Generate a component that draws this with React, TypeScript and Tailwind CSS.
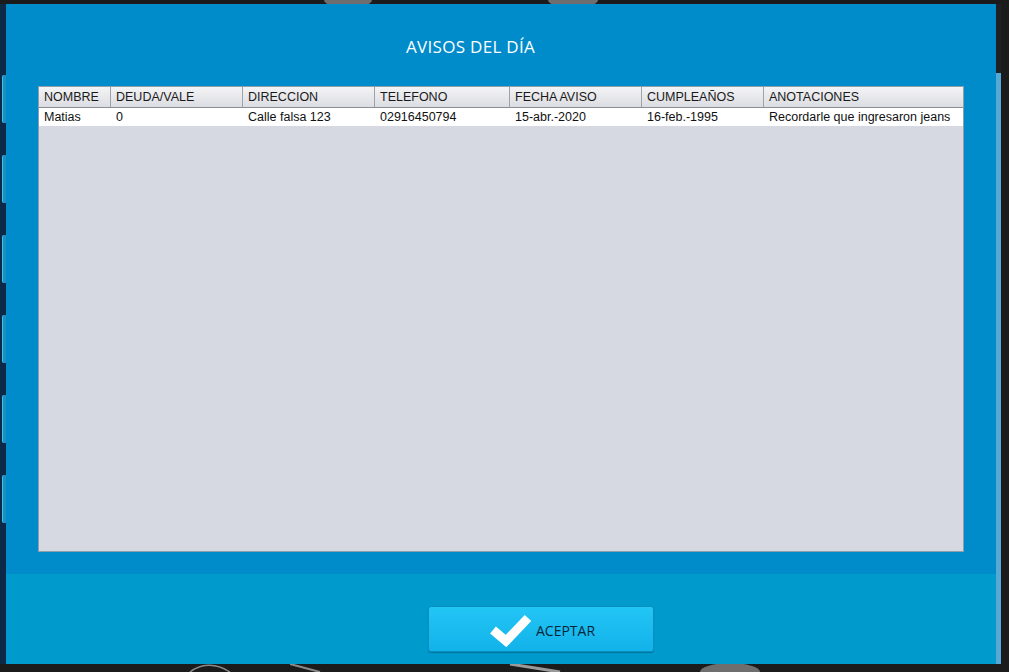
import React from 'react';

const columns = [
  { label: 'NOMBRE', w: 'w-[72px]' },
  { label: 'DEUDA/VALE', w: 'w-[132px]' },
  { label: 'DIRECCION', w: 'w-[132px]' },
  { label: 'TELEFONO', w: 'w-[135px]' },
  { label: 'FECHA AVISO', w: 'w-[132px]' },
  { label: 'CUMPLEAÑOS', w: 'w-[122px]' },
  { label: 'ANOTACIONES', w: 'flex-1' },
];

const rows = [
  ['Matias', '0', 'Calle falsa 123', '02916450794', '15-abr.-2020', '16-feb.-1995', 'Recordarle que ingresaron jeans'],
];

const SideTabs: React.FC = () => (
  <div className="w-[6px] bg-[#0c2a48] flex flex-col pt-[71px] gap-[32px]">
    {[0, 1, 2, 3, 4, 5].map((i) => (
      <div key={i} className="h-[48px] ml-[2px] w-[4px] rounded-l-[2px] bg-[#1d8fc0] border-l border-[#3cc4f0]" />
    ))}
  </div>
);

const App: React.FC = () => {
  return (
    <div className="relative w-[1009px] h-[672px] bg-[#1b1b1c] overflow-hidden font-['Liberation_Sans',Arial,sans-serif]">
      {/* wallpaper scraps */}
      <svg className="absolute inset-0" width="1009" height="672">
        <ellipse cx="348" cy="0" rx="24" ry="8" fill="#6e6e6e" />
        <ellipse cx="573" cy="0" rx="25" ry="8" fill="#6e6e6e" />
        <path d="M190 672 C 200 664, 215 662, 230 672" stroke="#8a8a8a" strokeWidth="1.5" fill="none" />
        <path d="M290 664 L 320 672" stroke="#8a8a8a" strokeWidth="2" fill="none" />
        <path d="M510 664 L 560 672" stroke="#9a9a9a" strokeWidth="3" fill="none" />
        <ellipse cx="730" cy="672" rx="30" ry="9" fill="#6e6e6e" />
      </svg>

      <div className="relative flex h-full pt-[4px] pb-[8px]">
        <SideTabs />
        <div className="w-[990px] flex flex-col">
          {/* upper panel */}
          <div className="flex-1 bg-[#008bcb] flex flex-col">
            <div className="h-[82px] flex items-center pl-[400px]">
              <h1 className="text-white text-[17px] font-['Open_Sans',sans-serif] tracking-[0.3px] mt-[4px]">
                AVISOS DEL DÍA
              </h1>
            </div>
            <div className="ml-[32px] w-[926px] h-[466px] border border-[#8f9eab] bg-[#d6d9e1] flex flex-col">
              <div className="flex h-[21px] bg-gradient-to-b from-[#f4f4f6] to-[#dcdde2] border-b border-[#8a8d94]">
                {columns.map((c, i) => (
                  <div
                    key={c.label}
                    className={`${c.w} ${i < columns.length - 1 ? 'border-r border-[#9ea3ab]' : ''} px-[5px] text-[12.5px] leading-[21px] text-[#1a1a1a] whitespace-nowrap`}
                  >
                    {c.label}
                  </div>
                ))}
              </div>
              {rows.map((r, ri) => (
                <div key={ri} className="flex h-[18px] bg-white">
                  {r.map((v, i) => (
                    <div
                      key={i}
                      className={`${columns[i].w} px-[5px] text-[12.5px] leading-[19px] text-[#111] whitespace-nowrap`}
                    >
                      {v}
                    </div>
                  ))}
                </div>
              ))}
            </div>
            <div className="h-[22px]" />
          </div>

          {/* bottom bar */}
          <div className="h-[90px] bg-[#009acc] flex items-start pl-[422px] pt-[32px]">
            <button className="w-[226px] h-[46px] rounded-[3px] border border-[#0b8fc0] bg-gradient-to-b from-[#22c6f5] to-[#12b2ea] shadow-[0_1px_1px_rgba(0,0,0,0.25)] flex items-center pl-[61px] gap-[4px]">
              <svg width="42" height="34" viewBox="0 0 42 34" className="mt-[1px]">
                <path d="M3 17 L16 28 L38 5" stroke="white" strokeWidth="9" fill="none" strokeLinecap="butt" strokeLinejoin="miter" />
              </svg>
              <span className="text-[14px] text-[#08263a] font-['Open_Sans',sans-serif] mt-[2px]">ACEPTAR</span>
            </button>
          </div>
        </div>
        <div className="w-[5px] flex flex-col">
          <div className="h-[69px] bg-[#1f2125]" />
          <div className="flex-1 bg-[#56a9d4]" />
        </div>
      </div>
    </div>
  );
};

export default App;
